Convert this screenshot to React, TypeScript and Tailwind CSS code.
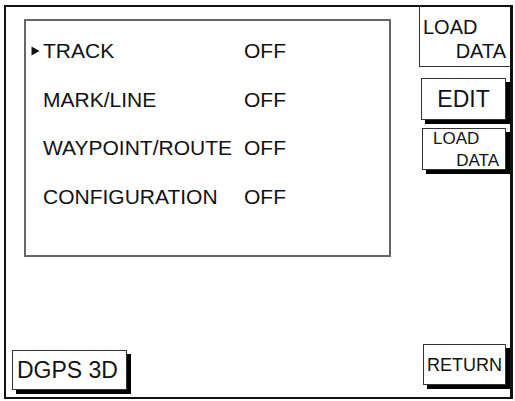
import React from 'react';

const rows = [
  { label: 'TRACK', value: 'OFF', active: true },
  { label: 'MARK/LINE', value: 'OFF' },
  { label: 'WAYPOINT/ROUTE', value: 'OFF' },
  { label: 'CONFIGURATION', value: 'OFF' },
];

const Cursor: React.FC = () => (
  <svg width="9" height="10" viewBox="0 0 9 10" className="block">
    <polygon points="0.5,0.5 8.5,5 0.5,9.5" fill="#111" />
  </svg>
);

const KeyButton: React.FC<{ className?: string; children: React.ReactNode }> = ({ className = '', children }) => (
  <div className={`border border-[#333] bg-white shadow-[4px_4px_0_#000] ${className}`}>{children}</div>
);

const App: React.FC = () => {
  return (
    <div className="w-[515px] h-[401px] bg-white overflow-hidden text-[#111] font-['Liberation_Sans',Arial,sans-serif]">
      <div className="ml-[4px] mt-[5px] w-[509px] h-[394px] border-2 border-r-[3px] border-[#111] flex">
        {/* data list + status */}
        <div className="flex-1 flex flex-col">
          <div className="ml-[18px] mt-[12px] w-[367px] h-[238px] border-2 border-[#666] pt-[19px]">
            <div className="flex flex-col gap-[27.7px]">
              {rows.map((r) => (
                <div key={r.label} className="grid grid-cols-[17px_201px_auto] items-center text-[21px] leading-[21px]">
                  <div className="pl-[5px] pt-[1px]">{r.active && <Cursor />}</div>
                  <span>{r.label}</span>
                  <span>{r.value}</span>
                </div>
              ))}
            </div>
          </div>
          <div className="flex-1" />
          <KeyButton className="ml-[6px] mb-[7px] w-[115px] h-[40px] flex items-center pl-[4px] text-[23px] leading-none">
            DGPS 3D
          </KeyButton>
        </div>

        {/* soft keys */}
        <div className="w-[91px] flex flex-col">
          <div className="h-[60px] border-l border-b border-[#333] pt-[8px] pl-[3px] pr-[4px] text-[20px] leading-[24px]">
            <div>LOAD</div>
            <div className="text-right">DATA</div>
          </div>
          <KeyButton className="ml-[2px] mt-[11px] w-[85px] h-[42px] flex items-center justify-center text-[23px] leading-none">
            EDIT
          </KeyButton>
          <KeyButton className="ml-[3px] mt-[8px] w-[84px] h-[42px] pl-[10px] pr-[6px] text-[17px] leading-[24px]">
            <div className="-mt-[2px]">LOAD</div>
            <div className="text-right -mt-[2px]">DATA</div>
          </KeyButton>
          <div className="flex-1" />
          <KeyButton className="ml-[4px] mb-[12px] w-[83px] h-[41px] flex items-center justify-center text-[18px] leading-none">
            RETURN
          </KeyButton>
        </div>
      </div>
    </div>
  );
};

export default App;
